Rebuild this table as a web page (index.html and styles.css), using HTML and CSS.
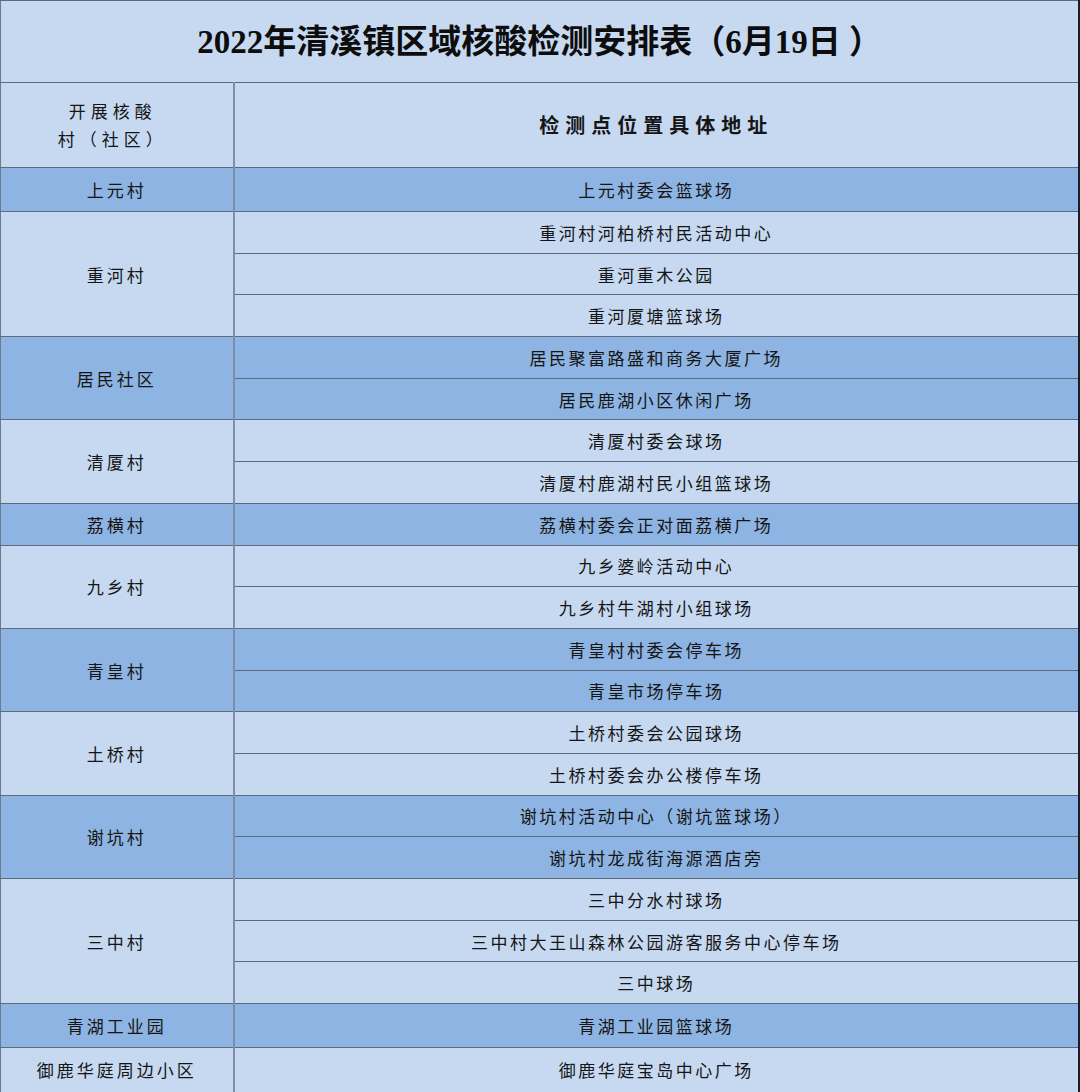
FILE: index.html
```html
<!DOCTYPE html>
<html lang="zh">
<head>
<meta charset="utf-8">
<title>2022年清溪镇区域核酸检测安排表</title>
<link rel="stylesheet" href="styles.css">
</head>
<body>
<table class="sheet">
  <colgroup><col class="c-left"><col class="c-right"></colgroup>
  <tr class="title-row"><td colspan="2" class="title">2022年清溪镇区域核酸检测安排表（6月19日 ）</td></tr>
  <tr class="head-row light"><td class="v head-left">开展核酸<br>村（社区）</td><td class="head-right">检测点位置具体地址</td></tr>

  <tr class="dark single"><td class="v">上元村</td><td>上元村委会篮球场</td></tr>

  <tr class="light"><td class="v" rowspan="3">重河村</td><td>重河村河柏桥村民活动中心</td></tr>
  <tr class="light"><td>重河重木公园</td></tr>
  <tr class="light"><td>重河厦塘篮球场</td></tr>

  <tr class="dark"><td class="v" rowspan="2">居民社区</td><td>居民聚富路盛和商务大厦广场</td></tr>
  <tr class="dark"><td>居民鹿湖小区休闲广场</td></tr>

  <tr class="light"><td class="v" rowspan="2">清厦村</td><td>清厦村委会球场</td></tr>
  <tr class="light"><td>清厦村鹿湖村民小组篮球场</td></tr>

  <tr class="dark"><td class="v">荔横村</td><td>荔横村委会正对面荔横广场</td></tr>

  <tr class="light"><td class="v" rowspan="2">九乡村</td><td>九乡婆岭活动中心</td></tr>
  <tr class="light"><td>九乡村牛湖村小组球场</td></tr>

  <tr class="dark"><td class="v" rowspan="2">青皇村</td><td>青皇村村委会停车场</td></tr>
  <tr class="dark"><td>青皇市场停车场</td></tr>

  <tr class="light"><td class="v" rowspan="2">土桥村</td><td>土桥村委会公园球场</td></tr>
  <tr class="light"><td>土桥村委会办公楼停车场</td></tr>

  <tr class="dark"><td class="v" rowspan="2">谢坑村</td><td>谢坑村活动中心（谢坑篮球场）</td></tr>
  <tr class="dark"><td>谢坑村龙成街海源酒店旁</td></tr>

  <tr class="light"><td class="v" rowspan="3">三中村</td><td>三中分水村球场</td></tr>
  <tr class="light"><td>三中村大王山森林公园游客服务中心停车场</td></tr>
  <tr class="light"><td>三中球场</td></tr>

  <tr class="dark single"><td class="v">青湖工业园</td><td>青湖工业园篮球场</td></tr>
  <tr class="light last"><td class="v">御鹿华庭周边小区</td><td>御鹿华庭宝岛中心广场</td></tr>
</table>
</body>
</html>
```

FILE: styles.css
```css
html, body {
  margin: 0;
  padding: 0;
  background: #c6d9f1;
}
.sheet {
  width: 1080px;
  border-collapse: collapse;
  table-layout: fixed;
  font-family: "Noto Sans CJK SC", "Noto Sans", sans-serif;
  color: #151515;
  border-left: 1px solid #6b7a8c;
  border-top: 1px solid #6b7a8c;
  border-right: 2px solid #1a1e26;
  border-bottom: 2px solid #1a1e26;
}
.c-left { width: 233px; }
.sheet td {
  padding: 0;
  text-align: center;
  vertical-align: middle;
  font-size: 17px;
  letter-spacing: 2.5px;
  border-top: 1px solid #5d6b7d;
  border-bottom: 1px solid #5d6b7d;
  line-height: 1;
}
.sheet td.v {
  border-right: 2px solid #7d8fa8;
  letter-spacing: 3px;
}
.sheet tr { height: 41.7px; }
.sheet tr.title-row { height: 82px; background: #c6d9f1; }
.sheet tr.head-row { height: 85px; }
.sheet tr.single { height: 44px; }
.sheet tr.last { height: 45px; }
.sheet td.title {
  font-family: "Liberation Serif", "Noto Sans CJK SC", serif;
  font-weight: 700;
  font-size: 33px;
  letter-spacing: 0;
  color: #0d0d0d;
  padding-top: 2px;
}
.sheet td.head-left {
  font-size: 17px;
  letter-spacing: 5px;
  line-height: 28px;
  padding-right: 8px;
}
.sheet td.head-right {
  font-size: 20px;
  font-weight: 700;
  letter-spacing: 6px;
}
.light { background: #c6d9f1; }
.dark { background: #8db4e2; }
```
